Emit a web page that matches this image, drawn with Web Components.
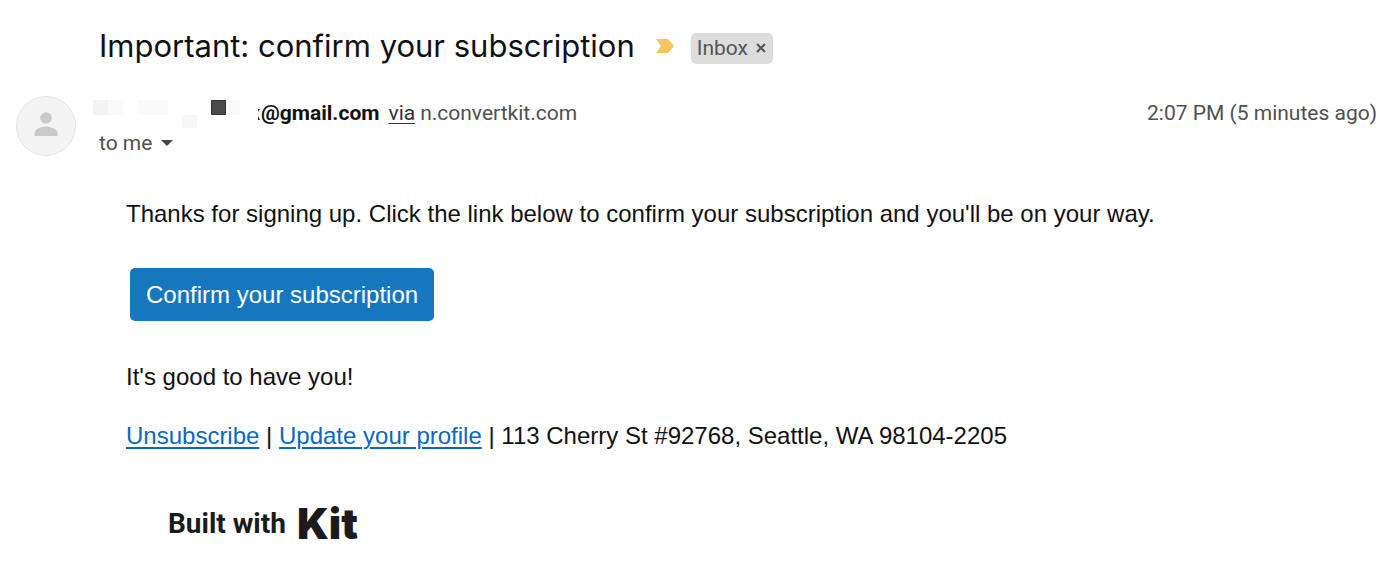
<!DOCTYPE html>
<html lang="en">
<head>
<meta charset="utf-8">
<title>Important: confirm your subscription</title>
<style>
body { margin: 0; background: #fff; }
</style>
</head>
<body>
<mail-view></mail-view>

<template id="mail-view">
  <style>
    :host { display: block; padding: 26px 23px 16px 16px; font-family: Roboto, sans-serif; color: #111; }
    mail-subject { margin-left: 83px; }
    mail-sender { margin-top: 30px; }
    mail-body { margin: 43px 0 0 110px; }
  </style>
  <mail-subject>Important: confirm your subscription</mail-subject>
  <mail-sender>
    <span slot="address">@gmail.com</span>
    <span slot="domain">n.convertkit.com</span>
    <time slot="time">2:07 PM (5 minutes ago)</time>
  </mail-sender>
  <mail-body></mail-body>
</template>

<template id="mail-subject">
  <style>
    :host { display: flex; align-items: center; }
    h1 { margin: 0; font: 400 31px/40px Inter, sans-serif; color: #111; }
    svg { width: 20px; height: 16px; margin: 0 16px 0 20px; }
    .label { display: flex; align-items: center; gap: 8px; height: 31px; padding: 0 7px 0 6px; border-radius: 5px; background: #ddd; color: #555; font-size: 21px; margin-top: 4px; }
    button { all: unset; display: flex; }
    button svg { width: 10px; height: 10px; margin: 0; }
  </style>
  <h1><slot></slot></h1>
  <svg viewBox="0 0 20 16" aria-hidden="true"><path d="M1 1h12l6 7-6 7H1l5-7z" fill="#f5c55c"/></svg>
  <span class="label">Inbox
    <button aria-label="Remove label Inbox"><svg viewBox="0 0 10 10"><path d="M1 1l8 8M9 1L1 9" stroke="#555" stroke-width="2"/></svg></button>
  </span>
</template>

<template id="mail-sender">
  <style>
    :host { display: flex; align-items: flex-start; color: #505050; font-size: 21px; line-height: 30px; }
    .avatar { flex: none; width: 60px; height: 60px; }
    .who { flex: 1; margin-left: 17px; }
    .line { display: flex; height: 34px; align-items: center; }
    .mask { width: 168px; height: 30px; }
    b { color: #111; font-weight: 700; }
    a { color: #333; margin: 0 5px 0 9px; text-decoration-thickness: 1px; text-underline-offset: 3px; }
    .to { display: flex; align-items: center; gap: 9px; height: 26px; margin-left: 6px; }
    button { all: unset; display: flex; }
    .to svg { width: 12px; height: 6px; }
    .time { line-height: 34px; white-space: nowrap; }
  </style>
  <svg class="avatar" viewBox="0 0 60 60" role="img" aria-label="Sender">
    <circle cx="30" cy="30" r="29.5" fill="#f4f4f4" stroke="#e4e4e4"/>
    <circle cx="30" cy="22" r="5.800" fill="#c9c9c9"/>
    <path d="M18.500 40v-2.500c0-5 7.500-7 11.500-7s11.500 2 11.500 7V40z" fill="#c9c9c9"/>
  </svg>
  <div class="who">
    <div class="line">
      <svg class="mask" viewBox="0 0 168 30" aria-hidden="true">
        <path d="M0 2h15v15H0z" fill="#f3f3f3"/>
        <path d="M15 2h15v15H15zM45 2h30v15H45zM133 2h14v15h-14z" fill="#fafafa"/>
        <path d="M89 17h15v13H89z" fill="#f7f7f7"/>
        <path d="M118.500 2.500h14v14h-14z" fill="#4b4b4b" stroke="#333"/>
        <path d="M165 11h2l-2 3zM165 18l2 4h-2z" fill="#222"/>
      </svg>
      <b><slot name="address"></slot></b>
      <a href="#via">via</a>
      <slot name="domain"></slot>
    </div>
    <div class="to">to me
      <button aria-label="Show details"><svg viewBox="0 0 12 6"><path d="M0 0h12L6 6z" fill="#444"/></svg></button>
    </div>
  </div>
  <div class="time"><slot name="time"></slot></div>
</template>

<template id="mail-body">
  <style>
    :host { display: block; font: 24px/30px "Liberation Sans", Arial, sans-serif; color: #111; }
    p { margin: 0; }
    cta-button { margin: 39px 0 0 4px; }
    .welcome { margin-top: 41px; }
    .footer { margin-top: 29px; }
    a { color: #0b68bd; text-decoration-thickness: 2px; text-underline-offset: 3px; }
    kit-badge { margin: 53px 0 0 42px; }
  </style>
  <p>Thanks for signing up. Click the link below to confirm your subscription and you'll be on your way.</p>
  <cta-button>Confirm your subscription</cta-button>
  <p class="welcome">It's good to have you!</p>
  <p class="footer"><a href="#unsubscribe">Unsubscribe</a> | <a href="#profile">Update your profile</a> | 113 Cherry St #92768, Seattle, WA 98104-2205</p>
  <kit-badge></kit-badge>
</template>

<template id="cta-button">
  <style>
    :host { display: block; }
    button { display: block; height: 53px; padding: 0 16px; border: 0; border-radius: 5px; background: #1677be; color: #fff; font: 400 24px/52px "Liberation Sans", Arial, sans-serif; }
  </style>
  <button><slot></slot></button>
</template>

<template id="kit-badge">
  <style>
    :host { display: flex; align-items: center; gap: 11px; color: #1b1b1b; font: 700 28px/40px Roboto, sans-serif; }
    strong { font: 900 42px/40px Inter, sans-serif; }
  </style>
  <span>Built with</span><strong>Kit</strong>
</template>

<script>
for (const name of ['mail-view', 'mail-subject', 'mail-sender', 'mail-body', 'cta-button', 'kit-badge']) {
  customElements.define(name, class extends HTMLElement {
    constructor() {
      super();
      this.attachShadow({ mode: 'open' }).append(document.getElementById(name).content.cloneNode(true));
    }
  });
}
</script>
</body>
</html>
